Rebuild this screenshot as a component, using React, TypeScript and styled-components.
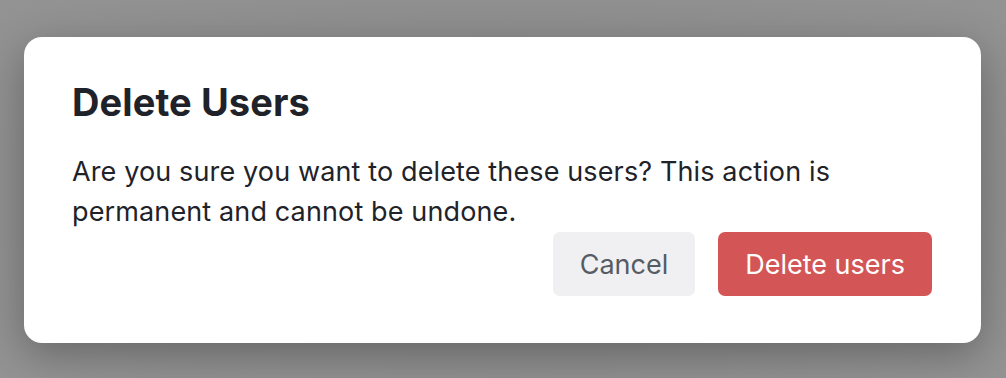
import React from "react";
import styled, { createGlobalStyle } from "styled-components";

const Global = createGlobalStyle`
  html, body { margin: 0; padding: 0; }
  body { background: #8f8f8f; font-family: Inter, "Noto Sans", sans-serif; }
`;

const Backdrop = styled.div`
  box-sizing: border-box;
  width: 1006px;
  height: 378px;
  padding: 37px 25px 35px 24px;
  background: radial-gradient(ellipse at 50% 50%, #858587 0%, #8e8e8f 60%, #939393 100%);
  display: flex;
`;

const Dialog = styled.div`
  box-sizing: border-box;
  flex: 1;
  background: #ffffff;
  border-radius: 18px;
  box-shadow: 0 12px 40px rgba(0, 0, 0, 0.28);
  padding: 42px 49px 47px 48px;
  display: flex;
  flex-direction: column;
`;

const Title = styled.h2`
  margin: 0 0 27px;
  font-size: 38px;
  font-weight: 700;
  line-height: 46px;
  color: #1f2329;
  letter-spacing: 0.1px;
`;

const Message = styled.p`
  margin: 0;
  font-size: 27px;
  line-height: 40px;
  color: #1f2329;
  letter-spacing: 0.13px;
  max-width: 820px;
`;

const Actions = styled.div`
  display: flex;
  justify-content: flex-end;
  gap: 23px;
`;

const Button = styled.button<{ $danger?: boolean }>`
  height: 64px;
  padding: 0 27px;
  border: none;
  border-radius: 7px;
  font-family: Inter, "Noto Sans", sans-serif;
  font-size: 27px;
  font-weight: 400;
  background: ${(p) => (p.$danger ? "#d45555" : "#f0f0f2")};
  color: ${(p) => (p.$danger ? "#ffffff" : "#575b63")};
  cursor: pointer;
`;

export default function App() {
  return (
    <>
      <Global />
      <Backdrop>
        <Dialog>
          <Title>Delete Users</Title>
          <Message>
            Are you sure you want to delete these users? This action is permanent and cannot be undone.
          </Message>
          <Actions>
            <Button>Cancel</Button>
            <Button $danger>Delete users</Button>
          </Actions>
        </Dialog>
      </Backdrop>
    </>
  );
}
